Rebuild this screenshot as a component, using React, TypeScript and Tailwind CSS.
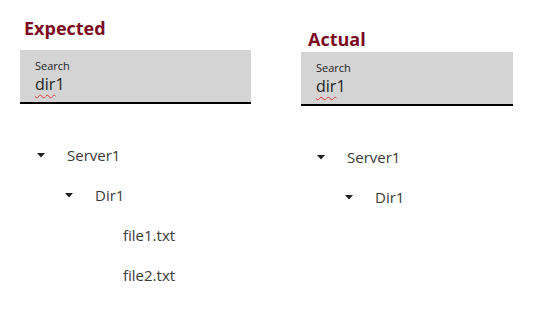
const TREE = [
  { label: 'Server1', depth: 0, open: true },
  { label: 'Dir1', depth: 1, open: true },
  { label: 'file1.txt', depth: 2 },
  { label: 'file2.txt', depth: 2 },
];

type Node = { label: string; depth: number; open?: boolean };

function Caret() {
  return (
    <svg width="8" height="5" viewBox="0 0 8 5" className="shrink-0">
      <polygon points="0,0 8,0 4,4.5" fill="#1f1f1f" />
    </svg>
  );
}

function SearchBox({ width }: { width: string }) {
  return (
    <div className={`${width} h-[54px] bg-[#d4d4d4] border-b-2 border-black pl-[15px] pt-[8px]`}>
      <div className="text-[11px] leading-[16px] text-[#222]">Search</div>
      <div className="text-[16px] leading-[20px] text-[#222]">
        <span className="underline decoration-wavy decoration-[#e23b3b] decoration-1 underline-offset-[4px]">dir</span>1
      </div>
    </div>
  );
}

function Tree({ nodes, offset }: { nodes: Node[]; offset: string }) {
  return (
    <div className={offset}>
      {nodes.map(n => (
        <div
          key={n.label}
          className="h-[40px] flex items-center text-[15px] text-[#3a3a3a]"
          style={{ paddingLeft: n.depth * 28 }}
        >
          <div className="w-[30px] flex">{n.open !== undefined && <Caret />}</div>
          <span>{n.label}</span>
        </div>
      ))}
    </div>
  );
}

export default function App() {
  return (
    <div className="w-[536px] h-[313px] bg-white flex font-['Open_Sans',sans-serif] overflow-hidden">
      {/* Expected */}
      <div className="ml-[20px] w-[231px] pt-[16px]">
        <h2 className="text-[18px] leading-[24px] font-bold text-[#7b0c1f] pl-[4px] mb-[10px]">Expected</h2>
        <SearchBox width="w-[231px]" />
        <Tree nodes={TREE} offset="mt-[31px] pl-[17px]" />
      </div>

      {/* Actual */}
      <div className="ml-[50px] w-[212px] pt-[27px]">
        <h2 className="text-[18px] leading-[24px] font-bold text-[#7b0c1f] pl-[7px] mb-[1px]">Actual</h2>
        <SearchBox width="w-[212px]" />
        <Tree nodes={TREE.slice(0, 2)} offset="mt-[31px] pl-[16px]" />
      </div>
    </div>
  );
}
